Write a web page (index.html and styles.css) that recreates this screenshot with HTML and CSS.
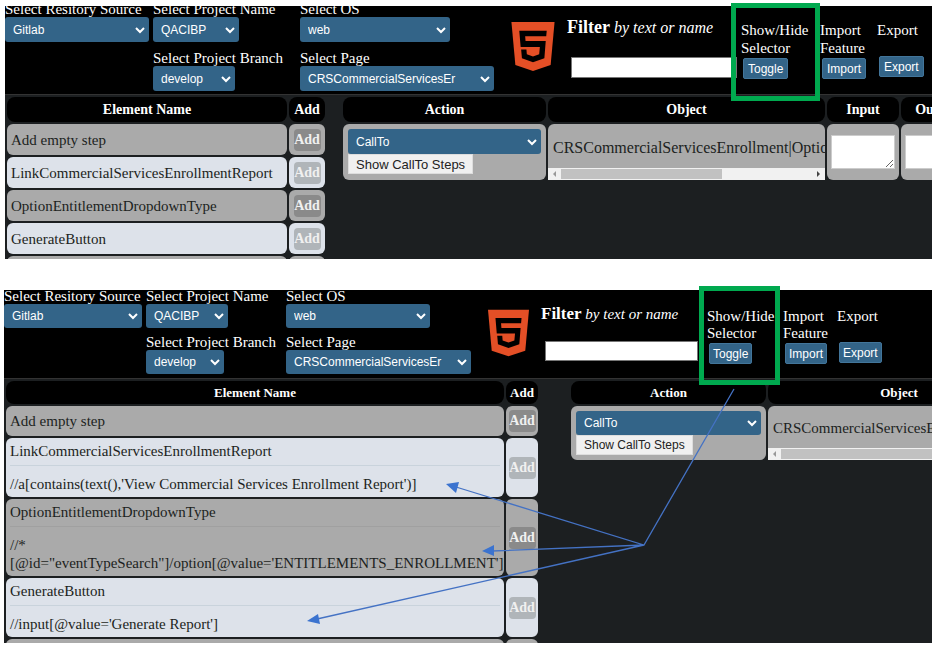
FILE: index.html
```
<!DOCTYPE html>
<html lang="en">
<head>
<meta charset="utf-8">
<title>Step builder</title>
<link rel="stylesheet" href="styles.css">
</head>
<body>
<main class="page">

<section class="shot shot-compact">
  <div class="app">
    <header class="toolbar">
      <div class="fields">
        <div class="field"><label for="a-src">Select Resitory Source</label><select id="a-src" class="pick pick-src"><option>Gitlab</option></select></div>
        <div class="field"><label for="a-prj">Select Project Name</label><select id="a-prj" class="pick pick-prj"><option>QACIBP</option></select></div>
        <div class="field"><label for="a-os">Select OS</label><select id="a-os" class="pick pick-os"><option>web</option></select></div>
        <div class="field field-branch"><label for="a-br">Select Project Branch</label><select id="a-br" class="pick pick-br"><option>develop</option></select></div>
        <div class="field"><label for="a-pg">Select Page</label><select id="a-pg" class="pick pick-pg"><option>CRSCommercialServicesEr</option></select></div>
      </div>
      <svg class="logo" viewBox="0 0 44 50" aria-hidden="true"><path fill="#e44f26" d="M0 0h44l-4 44-18 6-18-6z"/><path d="M8 9h28l-.5 5.500H14l.4 5H35l-1.400 17.500-11.600 4-11.300-4-.8-9h5.400l.4 5 6.300 2.200 6.300-2.200.7-7.500H9.400z"/></svg>
      <div class="filter"><label for="a-f"><b>Filter</b> <i>by text or name</i></label><input id="a-f" type="text"></div>
      <div class="tool tool-toggle"><span>Show/Hide Selector</span><button type="button">Toggle</button></div>
      <div class="tool tool-import"><span>Import Feature</span><button type="button">Import</button></div>
      <div class="tool tool-export"><span>Export</span><button type="button">Export</button></div>
    </header>
    <div class="work">
      <table class="elements">
        <thead><tr><th class="c-name">Element Name</th><th class="c-add">Add</th></tr></thead>
        <tbody>
          <tr><td>Add empty step</td><td class="add"><button type="button">Add</button></td></tr>
          <tr><td>LinkCommercialServicesEnrollmentReport</td><td class="add"><button type="button">Add</button></td></tr>
          <tr><td>OptionEntitlementDropdownType</td><td class="add"><button type="button">Add</button></td></tr>
          <tr><td>GenerateButton</td><td class="add"><button type="button">Add</button></td></tr>
          <tr><td></td><td></td></tr>
        </tbody>
      </table>
      <table class="steps">
        <thead><tr><th class="c-action">Action</th><th class="c-object">Object</th><th class="c-io">Input</th><th class="c-io">Output</th></tr></thead>
        <tbody><tr>
          <td class="action"><select class="pick" aria-label="Action"><option>CallTo</option></select><button type="button">Show CallTo Steps</button></td>
          <td class="object"><div class="object-text">CRSCommercialServicesEnrollment|OptionEntitlement</div><div class="scroll"><i class="arrow arrow-left"></i><i class="thumb"></i><i class="arrow arrow-right"></i></div></td>
          <td class="io"><textarea aria-label="Input"></textarea></td>
          <td class="io"><textarea aria-label="Output"></textarea></td>
        </tr></tbody>
      </table>
    </div>
  </div>
  <div class="highlight"></div>
</section>

<section class="shot shot-expanded">
  <div class="app">
    <header class="toolbar">
      <div class="fields">
        <div class="field"><label for="b-src">Select Resitory Source</label><select id="b-src" class="pick pick-src"><option>Gitlab</option></select></div>
        <div class="field"><label for="b-prj">Select Project Name</label><select id="b-prj" class="pick pick-prj"><option>QACIBP</option></select></div>
        <div class="field"><label for="b-os">Select OS</label><select id="b-os" class="pick pick-os"><option>web</option></select></div>
        <div class="field field-branch"><label for="b-br">Select Project Branch</label><select id="b-br" class="pick pick-br"><option>develop</option></select></div>
        <div class="field"><label for="b-pg">Select Page</label><select id="b-pg" class="pick pick-pg"><option>CRSCommercialServicesEr</option></select></div>
      </div>
      <svg class="logo" viewBox="0 0 44 50" aria-hidden="true"><path fill="#e44f26" d="M0 0h44l-4 44-18 6-18-6z"/><path d="M8 9h28l-.5 5.500H14l.4 5H35l-1.400 17.500-11.600 4-11.300-4-.8-9h5.400l.4 5 6.300 2.200 6.300-2.200.7-7.500H9.400z"/></svg>
      <div class="filter"><label for="b-f"><b>Filter</b> <i>by text or name</i></label><input id="b-f" type="text"></div>
      <div class="tool tool-toggle"><span>Show/Hide Selector</span><button type="button">Toggle</button></div>
      <div class="tool tool-import"><span>Import Feature</span><button type="button">Import</button></div>
      <div class="tool tool-export"><span>Export</span><button type="button">Export</button></div>
    </header>
    <div class="work">
      <table class="elements">
        <thead><tr><th class="c-name">Element Name</th><th class="c-add">Add</th></tr></thead>
        <tbody>
          <tr><td>Add empty step</td><td class="add"><button type="button">Add</button></td></tr>
          <tr><td>LinkCommercialServicesEnrollmentReport<hr>//a[contains(text(),'View Commercial Services Enrollment Report')]</td><td class="add"><button type="button">Add</button></td></tr>
          <tr><td>OptionEntitlementDropdownType<hr>//*<br>[@id="eventTypeSearch"]/option[@value='ENTITLEMENTS_ENROLLMENT']</td><td class="add"><button type="button">Add</button></td></tr>
          <tr><td>GenerateButton<hr>//input[@value='Generate Report']</td><td class="add"><button type="button">Add</button></td></tr>
          <tr><td></td><td></td></tr>
        </tbody>
      </table>
      <table class="steps">
        <thead><tr><th class="c-action">Action</th><th class="c-object">Object</th><th class="c-io">Input</th><th class="c-io">Output</th></tr></thead>
        <tbody><tr>
          <td class="action"><select class="pick" aria-label="Action"><option>CallTo</option></select><button type="button">Show CallTo Steps</button></td>
          <td class="object"><div class="object-text">CRSCommercialServicesEnrollment|OptionEntitlement</div><div class="scroll"><i class="arrow arrow-left"></i><i class="thumb"></i><i class="arrow arrow-right"></i></div></td>
          <td class="io"><textarea aria-label="Input"></textarea></td>
          <td class="io"><textarea aria-label="Output"></textarea></td>
        </tr></tbody>
      </table>
    </div>
  </div>
  <svg class="arrows" width="928" height="353" viewBox="4 290 928 353" aria-hidden="true">
    <g fill="none" stroke="#4472c4" stroke-width="1.300"><path d="M734 389L644 545L456 487M644 545L492 551M644 545L317 619"/></g>
    <g fill="#3b73cf"><path d="M446 484l13-2-3 11z"/><path d="M482 551l12-6v11z"/><path d="M307 621l11-7 2 10z"/></g>
  </svg>
  <div class="highlight"></div>
</section>

</main>
</body>
</html>
```
FILE: styles.css
```
* { box-sizing: border-box; }

body {
  margin: 0;
  background: #fff;
  font-family: "Liberation Serif", serif;
}

.page { padding: 6px 4px; }

.shot {
  position: relative;
  --text: 15px;
}

.shot-compact {
  --fields: 148px 147px 194px;
  --control: 25px;
  --row-gap: 8px;
  --head-text: 14px;
  --row: 31px;
  --object-text: 16px;
  height: 253px;
  margin: 0 0 31px 1px;
}

.shot-expanded {
  --fields: 142px 140px 185px;
  --control: 24px;
  --row-gap: 6px;
  --head-text: 13px;
  --row: 30px;
  --object-text: 15px;
  height: 353px;
}

.app {
  height: 100%;
  overflow: hidden;
  background: #1c1f21;
}

/* toolbar */
.toolbar {
  display: flex;
  align-items: flex-start;
  height: 89px;
  background: #000;
  border-bottom: 1px solid #333;
  color: #fff;
  font-size: var(--text);
}

.fields {
  display: grid;
  flex: none;
  grid-template-columns: var(--fields);
  row-gap: var(--row-gap);
  margin-top: -5px;
}

.shot-expanded .fields { margin-top: -2px; }

.field label {
  display: block;
  line-height: 16px;
  white-space: nowrap;
}

.field-branch { grid-column: 2; }

.pick {
  display: block;
  width: 100%;
  height: var(--control);
  padding: 0 20px 0 8px;
  border: 0;
  border-radius: 3px;
  appearance: none;
  color: #fff;
  font: 12px "Liberation Sans", sans-serif;
  background: #336488 url("data:image/svg+xml,%3Csvg xmlns='http://www.w3.org/2000/svg' width='10' height='8'%3E%3Cpath d='M1 2l4 4 4-4' fill='none' stroke='%23fff' stroke-width='2'/%3E%3C/svg%3E") no-repeat right 4px center;
}

.pick-src { width: 144px; }
.pick-prj { width: 86px; }
.pick-br { width: 82px; }
.pick-os { width: 150px; }
.shot-expanded .pick-src { width: 138px; }
.shot-expanded .pick-prj { width: 82px; }
.shot-expanded .pick-br { width: 78px; }
.shot-expanded .pick-os { width: 144px; }

.logo {
  flex: none;
  width: 44px;
  height: 49px;
  margin: 16px 12px 0 17px;
}

.shot-expanded .logo {
  width: 41px;
  height: 48px;
  margin: 19px 12px 0 17px;
}

.filter {
  flex: none;
  width: 174px;
  padding-top: 11px;
}

.filter label {
  display: block;
  font-size: 16px;
  line-height: 20px;
  white-space: nowrap;
}

.filter b { font-size: 18px; }

.filter input {
  display: block;
  width: 166px;
  height: 21px;
  margin: 19px 0 0 4px;
  border: 1px solid #767676;
  background: #fff;
}

.shot-expanded .filter {
  width: 166px;
  padding-top: 14px;
}

.shot-expanded .filter label { font-size: 15px; }
.shot-expanded .filter b { font-size: 17px; }

.shot-expanded .filter input {
  width: 153px;
  height: 20px;
  margin-top: 17px;
}

.tool {
  flex: none;
  padding-top: 15px;
  line-height: 18px;
}

.tool span { display: block; }
.tool-toggle { width: 79px; }
.tool-import { width: 57px; }
.tool-toggle span, .tool-import span { width: 56px; }
.tool-export span { margin-bottom: 17px; }

.shot-expanded .tool { padding-top: 18px; line-height: 17px; }
.shot-expanded .tool-toggle { width: 76px; }
.shot-expanded .tool-import { width: 54px; }

.tool button {
  display: block;
  height: 21px;
  margin: 1px 0 0 2px;
  padding: 0 4px;
  border: 1px solid #42759a;
  border-radius: 2px;
  background: #336488;
  color: #fff;
  font: 12px "Liberation Sans", sans-serif;
}

.shot-expanded .tool button { padding: 0 3px; }

/* tables */
.work {
  display: flex;
  align-items: flex-start;
}

table {
  flex: none;
  table-layout: fixed;
  border-spacing: 2px;
  color: #1c1f21;
  font-size: var(--text);
  line-height: 18px;
}

th {
  height: 25px;
  padding: 0;
  border-radius: 8px;
  background: #000;
  color: #fff;
  font-size: var(--head-text);
}

.shot-expanded th { height: 23px; }

td {
  height: var(--row);
  padding: 4px;
  border-radius: 6px;
  background: #aaa;
  white-space: nowrap;
}

.elements { width: 322px; margin-right: 14px; }
.elements .c-add { width: 36px; }
.shot-expanded .elements { width: 536px; margin-right: 29px; }
.shot-expanded .elements .c-add { width: 32px; }
.elements tr:nth-child(even) td { background: #dde2ea; }

td hr {
  height: 1px;
  margin: 5px 0 9px;
  border: 0;
  background: #c9d3dc;
}

tr:nth-child(odd) td hr { background: #a0a0a0; }

.elements .add { padding: 0; text-align: center; }

.add button {
  width: 27px;
  height: 22px;
  padding: 0;
  border: 0;
  border-radius: 4px;
  background: #8a8a8a;
  color: #f0f0f0;
  font: bold 14px "Liberation Serif", serif;
}

tr:nth-child(even) .add button { background: #b0b5b9; }

.steps { width: 634px; }
.c-action { width: 203px; }
.c-object { width: 277px; }
.steps td { height: 56px; }
.shot-expanded .steps { width: 611px; }
.shot-expanded .c-action { width: 195px; }
.shot-expanded .c-object { width: 262px; }
.shot-expanded .steps td { height: 54px; }

.steps .action { padding: 5px; vertical-align: top; }

.action button {
  display: block;
  height: 20px;
  padding: 0 7px;
  border: 1px solid #ddd;
  background: #f0f0f0;
  color: #222;
  font: 13px "Liberation Sans", sans-serif;
}

.shot-expanded .action button { font-size: 12px; }

.steps .object { padding: 0; vertical-align: bottom; border-radius: 6px 6px 0 0; }

.object-text {
  overflow: hidden;
  padding: 0 0 11px 5px;
  font-size: var(--object-text);
}

.scroll {
  display: flex;
  align-items: center;
  height: 12px;
  background: #f1f1f1;
}

.arrow { width: 13px; }

.arrow::before {
  content: "";
  display: block;
  width: 0;
  margin-left: 5px;
  border: 3px solid transparent;
}

.arrow-left::before { border-left: 0; border-right-color: #999; }
.arrow-right { margin-left: auto; }
.arrow-right::before { border-right: 0; border-left-color: #444; }

.thumb { width: 58%; height: 10px; background: #c1c1c1; }

.io textarea {
  display: block;
  width: 100%;
  height: 34px;
  margin: 0;
  border: 1px solid #ccc;
  background: #fff;
}

/* annotations lying over the app */
.highlight {
  position: absolute;
  top: -3px;
  left: 726px;
  width: 89px;
  height: 98px;
  border: 5px solid #00a94f;
}

.shot-expanded .highlight {
  top: -4px;
  left: 695px;
  width: 81px;
  height: 99px;
}

.arrows {
  position: absolute;
  top: 0;
  left: 0;
}
```
